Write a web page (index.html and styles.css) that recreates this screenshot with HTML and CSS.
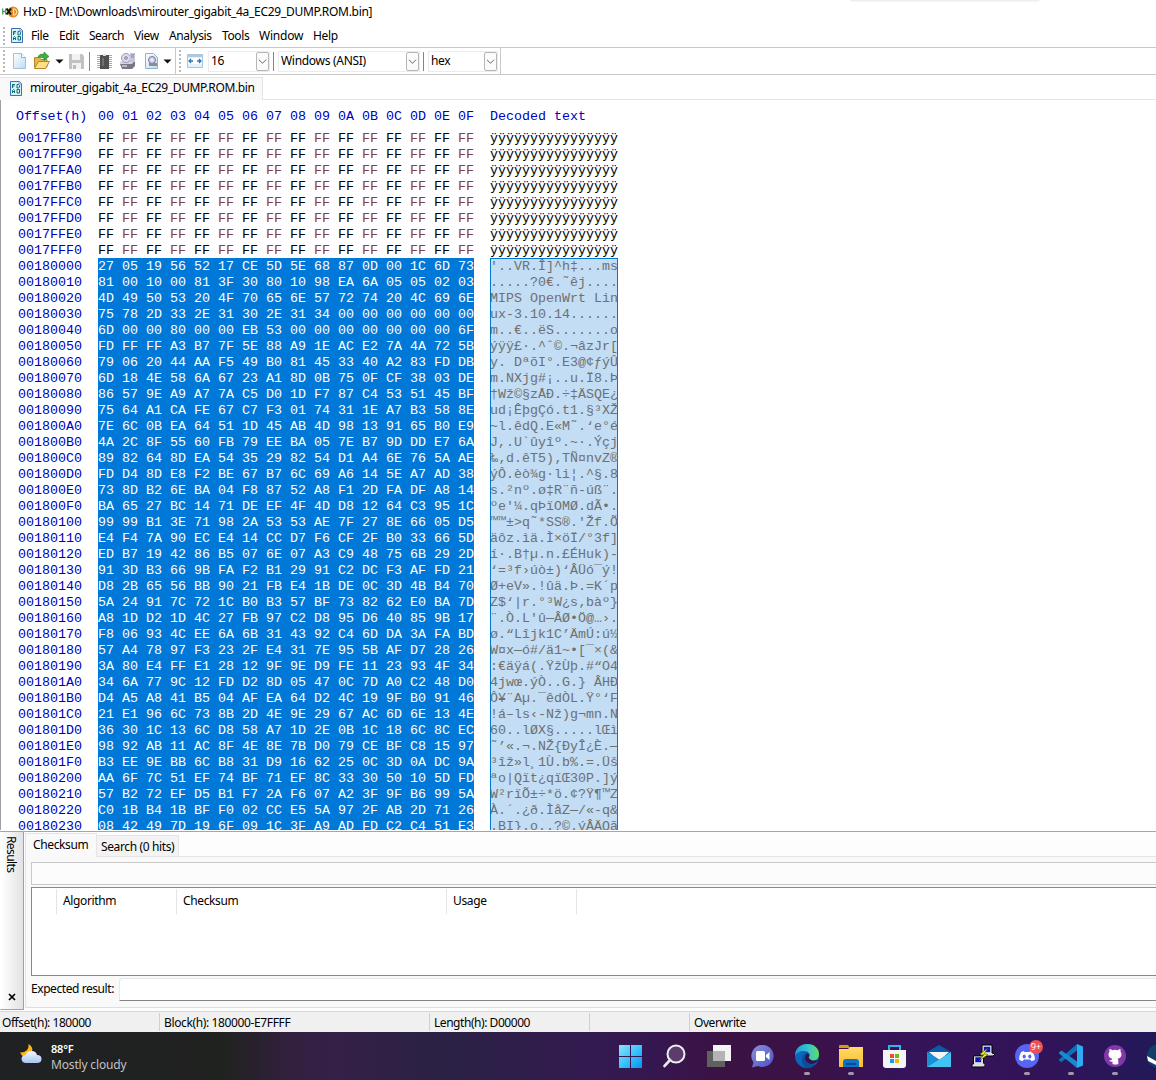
FILE: index.html
```html
<!DOCTYPE html>
<html lang="en">
<head>
<meta charset="utf-8">
<title>HxD</title>
<link rel="stylesheet" href="styles.css">
</head>
<body>
<svg width="0" height="0" class="defs">
  <defs>
    <linearGradient id="page" x1="0" y1="0" x2="1" y2="1"><stop offset="0" stop-color="#fff"/><stop offset="1" stop-color="#bcdcf5"/></linearGradient>
    <linearGradient id="win" x1="0" y1="0" x2="1" y2="1"><stop offset="0" stop-color="#8be4ff"/><stop offset=".5" stop-color="#3cc4fb"/><stop offset="1" stop-color="#0890f5"/></linearGradient>
    <linearGradient id="edge" x1="0" y1="0" x2="1" y2="0"><stop offset="0" stop-color="#1a9be0"/><stop offset=".6" stop-color="#38c8c8"/><stop offset="1" stop-color="#62dc58"/></linearGradient>
    <linearGradient id="folder" x1="0" y1="0" x2="0" y2="1"><stop offset="0" stop-color="#ffdb68"/><stop offset="1" stop-color="#fbbb2c"/></linearGradient>
    <linearGradient id="chat" x1="0" y1="0" x2="1" y2="1"><stop offset="0" stop-color="#8e8fdc"/><stop offset="1" stop-color="#4b52c4"/></linearGradient>
    <linearGradient id="cloud" x1="0" y1="0" x2="0" y2="1"><stop offset="0" stop-color="#f2f7ff"/><stop offset="1" stop-color="#a9c4f0"/></linearGradient>
    <symbol id="hexdoc" viewBox="0 0 12 15">
      <path d="M.5.5h9l2 2v12H.5z" fill="#d8f1f8" stroke="#3a6fb0"/>
      <path d="M9 .5V3h2.500" fill="#fff" stroke="#3a6fb0" stroke-width=".7"/>
      <path d="M2.500 7V3.500H5M2.500 5H4.500M7 3.500v3.500h1.500l1-1v-1.500l-1-1zM2.500 12V9.500l1-1 1 1V12M2.500 10.500h2M7 8.500h2.500V12H7z" fill="none" stroke="#087078"/>
    </symbol>
    <symbol id="chev" viewBox="0 0 12 19"><path d="M2 7.500l4 4 4-4" fill="none" stroke="#555"/></symbol>
  </defs>
</svg>

<div class="window">
  <header class="titlebar">
    <svg class="app-icon" width="17" height="12" viewBox="0 0 17 12">
      <circle cx="11" cy="6" r="5.500" fill="#e58a22"/>
      <path d="M.7 2.500v6M.7 5.500h3M3.700 2.500v6" stroke="#4aa35a" stroke-width="1.300" fill="none"/>
      <path d="M4.500 2.500l4.500 6M9 2.500l-4.500 6" stroke="#111" stroke-width="2"/>
      <path d="M11.500 3v6h1.200q2-1 2-3t-2-3z" fill="none" stroke="#ffe0a8" stroke-width="1.200"/>
    </svg>
    <span class="title">HxD - [M:\Downloads\mirouter_gigabit_4a_EC29_DUMP.ROM.bin]</span>
    <i class="drag-hint"></i>
  </header>

  <nav class="menubar">
    <i class="grip"></i>
    <svg class="menu-icon" width="12" height="15"><use href="#hexdoc"/></svg>
    <span class="m-file">File</span><span class="m-edit">Edit</span><span class="m-search">Search</span><span class="m-view">View</span><span class="m-analysis">Analysis</span><span class="m-tools">Tools</span><span class="m-window">Window</span><span class="m-help">Help</span>
  </nav>

  <div class="toolbar">
    <div class="tools">
      <i class="grip"></i>
      <svg width="168" height="24" viewBox="5 49 168 24">
        <path d="M13.500 53.500h8l4 4v11h-12z" fill="url(#page)" stroke="#a8bfd4"/><path d="M21.500 53.500v4h4" fill="#fff" stroke="#8fb2d0"/>
        <path d="M34.500 67V57.500h5l1.500 2h6V67z" fill="#e8b54a" stroke="#b98524"/><path d="M34.500 68.500l4-7h11l-4 7z" fill="#ffe08a" stroke="#b98524"/>
        <path d="M38 57q1-3.500 6-3v-2l5 4.500-5 4v-2.500q-3-.5-6-1z" fill="#3fae49" stroke="#22802c" stroke-width=".6"/>
        <path d="M55.500 59.500h8l-4 4z" fill="#111"/>
        <path d="M69 54h13l2 2v13H69z" fill="#c2c2c2"/><path d="M72 54h8v6h-8zM72 63h9v6h-9z" fill="#f2f2f2"/><path d="M73 65h3v4h-3z" fill="#bbb"/>
        <path d="M89.500 52v19" stroke="#858585"/>
        <path d="M98.500 55v14M110.500 55v14" stroke="#aaa" stroke-width="3" stroke-dasharray="1 1"/><path d="M100 55h9v14h-9z" fill="#505050"/><path d="M103 54h3v2h-3z" fill="#ddd"/><path d="M102 58h2v8h-2z" fill="#707070"/>
        <path d="M120 64l4-3h11v5l-3 3h-10z" fill="#777785"/><path d="M120 62l4-2h11l-3 4h-12z" fill="#d4d4dc"/><circle cx="126" cy="58" r="4.500" fill="#dcdcf2" stroke="#9898c4"/><circle cx="126" cy="58" r="1.300" fill="#f8f8ff" stroke="#777"/><path d="M130 53h5v9h-5z" fill="#c4c4da"/><path d="M131 55h3M131 57h3" stroke="#8888ac"/><path d="M122 66h5" stroke="#f8f8f8"/>
        <path d="M145.500 53.500h8l4 4v11h-12z" fill="url(#page)" stroke="#92b0cf"/><circle cx="152" cy="60" r="3.500" fill="#d0d0e8" stroke="#77779f"/><path d="M149 63h8v3h-8z" fill="#8c8c98"/><circle cx="152" cy="60" r="1" fill="#fff"/>
        <path d="M163.500 59.500h8l-4 4z" fill="#111"/>
      </svg>
    </div>
    <div class="tools options">
      <i class="grip"></i>
      <svg class="width-icon" width="16" height="14" viewBox="0 0 16 14"><path d="M.5.5h15v13H.5z" fill="#e4f2fc" stroke="#a9c4dc"/><path d="M0 0h16v3H0z" fill="#aec8dd"/><path d="M1 4h14v6H1z" fill="#fff"/><path d="M2 7h4M10 7h4M4 5L2 7l2 2M12 5l2 2-2 2" stroke="#2878bd" fill="none" stroke-width="1.300"/></svg>
      <div class="combo c1"><span>16</span><svg width="13" height="19"><use href="#chev"/></svg></div>
      <i class="sep"></i>
      <div class="combo c2"><span>Windows (ANSI)</span><svg width="13" height="19"><use href="#chev"/></svg></div>
      <i class="sep"></i>
      <div class="combo c3"><span>hex</span><svg width="13" height="19"><use href="#chev"/></svg></div>
    </div>
  </div>

  <div class="doc-tabs">
    <div class="doc-tab"><svg width="12" height="15"><use href="#hexdoc"/></svg><span>mirouter_gigabit_4a_EC29_DUMP.ROM.bin</span></div>
    <div class="doc-fill"></div>
  </div>

  <main class="editor">
    <div class="hex-head"><span class="off">Offset(h)</span><span class="cols">00 01 02 03 04 05 06 07 08 09 0A 0B 0C 0D 0E 0F</span><span>Decoded text</span></div>
    <div class="hex-body" id="hex"></div>
  </main>

  <section class="results">
    <aside class="side"><span class="side-label">Results</span><svg width="8" height="8" viewBox="0 0 8 8"><path d="M1 1l6 6M7 1L1 7" stroke="#000" stroke-width="1.700"/></svg></aside>
    <div class="panel">
      <div class="panel-tabs"><div class="ptab active"><span>Checksum</span></div><div class="ptab"><span>Search (0 hits)</span></div><div class="pfill"></div></div>
      <div class="panel-page">
        <div class="strip"></div>
        <div class="list">
          <div class="cell k0"></div><div class="cell k1"><span>Algorithm</span></div><div class="cell k2"><span>Checksum</span></div><div class="cell k3"><span>Usage</span></div>
        </div>
        <div class="expected"><span>Expected result:</span><div class="field"></div></div>
      </div>
    </div>
  </section>

  <footer class="status">
    <div class="s1"><span>Offset(h): 180000</span></div><div class="s2"><span>Block(h): 180000-E7FFFF</span></div><div class="s3"><span>Length(h): D00000</span></div><div class="s4"></div><div class="s5"><span>Overwrite</span></div>
  </footer>
</div>

<div class="taskbar">
  <div class="weather">
    <svg width="22" height="20" viewBox="0 0 22 20"><path d="M8.500 0q5 3 3.500 7.500T5 13Q2 12.500 0 8.500q4 .5 6.500-2T8.500 0z" fill="#fbb716"/><path d="M6 19q-4 0-4.500-4 0-3.500 4-4Q7 7 11.500 7q4.500 0 5.500 4 4.500 0 4.500 4T17 19z" fill="url(#cloud)"/></svg>
    <div class="w-text"><b>88°F</b><span>Mostly cloudy</span></div>
  </div>
  <div class="apps">
    <div class="app"><svg viewBox="0 0 24 24"><path d="M0 1h11v11H0zM12 1h11v11H12zM0 13h11v11H0zM12 13h11v11H12z" fill="url(#win)"/></svg></div>
    <div class="app"><svg viewBox="0 0 24 24"><circle cx="13" cy="10" r="8.500" fill="#6a4a78" fill-opacity=".75" stroke="#eee" stroke-width="2"/><path d="M7 16l-5.500 6" stroke="#e8e8e8" stroke-width="2.600" stroke-linecap="round"/></svg></div>
    <div class="app"><svg viewBox="0 0 24 24"><path d="M6 1h18v16H6z" fill="#f3f3f3"/><path d="M0 7h18v16H0z" fill="#606060"/><path d="M6 7h12v10H6z" fill="#b4b4b4"/></svg></div>
    <div class="app"><svg viewBox="0 0 24 24"><path d="M12 1a11 11 0 1 1-5 21l-6 1.500 1.500-5A11 11 0 0 1 12 1z" fill="url(#chat)"/><rect x="5" y="7" width="9" height="10" rx="1.500" fill="#fff"/><path d="M15 11l3.500-3v8L15 13z" fill="#fff"/></svg></div>
    <div class="app"><svg viewBox="0 0 24 24"><circle cx="12" cy="12" r="12" fill="#0c65b8"/><path d="M0 12C0 4 6 0 12 0c8 0 12 5 12 10 0 5-4 7-7 7-4 0-5-2-3-4 2-3-1-6-5-6-4 0-8 2-9 5z" fill="url(#edge)"/><path d="M8.500 13c0 6 6 9 12.500 6.500A12 12 0 0 1 13 24C5 22 5 13 11 8.500c3 0 4.500 2 3 4.500-2 3 1 4 3 4 2 0 4-.5 5-1.500-1 3-5 5-8 4.500-4-.5-6-4-5.500-7z" fill="#0a4f9c"/><path d="M13.500 13.500q1.500-3-1-4-3 2-2.500 5.500 1.500 4 6 5 5 0 7-4-7 2-9.500-2.500z" fill="#371046"/></svg><i></i></div>
    <div class="app"><svg viewBox="0 0 24 24"><path d="M0 2q0-1 1-1h8l2 3H0z" fill="#d99a0b"/><path d="M0 5h9l2-2h13v20H0z" fill="url(#folder)"/><path d="M4 23v-5q0-3 3-3h10q3 0 3 3v5z" fill="#0f72c4"/><path d="M7 19h10v2H7z" fill="#064b8d"/></svg><i></i></div>
    <div class="app"><svg viewBox="0 0 24 24"><path d="M6 7V2h11v5" fill="none" stroke="#2fb5ec" stroke-width="2"/><path d="M0 6h23v15q0 3-3 3H3q-3 0-3-3z" fill="#f4f4f4"/><path d="M7 10h4v4H7z" fill="#e8502a"/><path d="M12 10h4v4h-4z" fill="#7bb518"/><path d="M7 15h4v4H7z" fill="#129fe2"/><path d="M12 15h4v4h-4z" fill="#f7b40c"/></svg></div>
    <div class="app"><svg viewBox="0 0 24 24"><path d="M0 8l12-7 12 7v3H0z" fill="#0a5ca8"/><path d="M2 8h20L12 17z" fill="#f4f4f4"/><path d="M0 8l24 15H0z" fill="#1998df"/><path d="M24 8v15H0z" fill="#43c3f2"/><path d="M0 8v15l12-7.500z" fill="#198fd6"/></svg></div>
    <div class="app"><svg viewBox="0 0 24 24"><path d="M11 1h10v8l3 1-2 2H9V10l2-1z" fill="#ddd" stroke="#000"/><path d="M12.500 2.500h7v6h-7z" fill="#0814c0" stroke="#fff" stroke-width=".5"/><path d="M2.500 12h10v7l2 2-2 2H1v-3h1.500z" fill="#ddd" stroke="#000"/><path d="M4 13h6.500v5.500H4z" fill="#0814c0" stroke="#fff" stroke-width=".5"/><path d="M17 4l-8 6 4 .5L8 17l9-6.500-4-.5z" fill="#ff0" stroke="#443b00" stroke-width=".5"/></svg></div>
    <div class="app"><svg viewBox="0 0 24 24"><circle cx="12" cy="12" r="12" fill="#5865f2"/><path d="M8.500 7l1 1h5l1-1 2.500 1.200q2 3.800 2 7.300-2 1.500-3.800 1.500l-1-1.500H8.800l-1 1.500Q6 17 4 15.500q0-3.500 2-7.300z" fill="#fff"/><ellipse cx="9.200" cy="12.500" rx="1.600" ry="1.900" fill="#5865f2"/><ellipse cx="14.800" cy="12.500" rx="1.600" ry="1.900" fill="#5865f2"/></svg><i></i><span class="badge">9+</span></div>
    <div class="app"><svg viewBox="0 0 24 24"><path d="M0 15.500L18 0v6.500L2.500 18 0 16.500z" fill="#0e70b8"/><path d="M0 8.500L2.500 6.500 18 17.500V24L0 9.500z" fill="#168bd2"/><path d="M18 0l6 2.500v19L18 24z" fill="#30aaf0"/></svg><i></i></div>
    <div class="app"><svg viewBox="0 0 24 24"><circle cx="12" cy="12" r="11" fill="#8438a8"/><path d="M9.500 20v-2.500q-2.500.7-3.500-1.500 1.500.5 2.500 0 .3-.8 1-1.200Q5.500 14 5.500 10.500q0-1.800 1-2.800-.3-1.500.2-2.700 1.700.2 2.600 1.200 2.700-.7 5.400 0 .9-1 2.600-1.200.5 1.200.2 2.700 1 1 1 2.800 0 3.500-4 4.300.8.900.8 2.200v3q-3 1-5.800 0z" fill="#fff"/></svg><i></i></div>
    <div class="app last"><svg viewBox="0 0 24 24"><circle cx="12" cy="12" r="12" fill="#123f68"/><path d="M0 12l9 5 5-5v6l-5 3-8-4z" fill="#fff"/></svg></div>
  </div>
</div>
<script src="app.js"></script>
</body>
</html>
```

FILE: styles.css
```css
* { box-sizing: border-box; }
body { margin: 0; width: 1156px; height: 1080px; overflow: hidden; background: #fff; color: #000; font: 12px/16px "Noto Sans", "Open Sans", sans-serif; }
.defs { position: absolute; }
svg { display: block; flex: none; }
span { white-space: pre; }
.window { height: 1032px; display: flex; flex-direction: column; font-size: 12px; letter-spacing: -0.37px; }

.titlebar { height: 24px; display: flex; align-items: center; gap: 4px; padding-left: 2px; padding-bottom: 1px; position: relative; }
.title { letter-spacing: -0.29px; }
.drag-hint { position: absolute; left: 849px; top: -8px; width: 192px; height: 9px; border-radius: 8px; background: #eee; box-shadow: 0 0 2px #ddd; }

.menubar { height: 23px; display: flex; align-items: center; padding-left: 3px; }
.grip { flex: none; width: 2px; height: 18px; background: repeating-linear-gradient(#b9b9b9 0 2px, transparent 2px 4px); }
.menu-icon { margin: 0 8px 0 6px; }
.menubar span { flex: none; }
.m-file { width: 28px; } .m-edit { width: 30px; } .m-search { width: 45px; letter-spacing: -0.5px; } .m-view { width: 35px; }
.m-analysis { width: 53px; } .m-tools { width: 37px; } .m-window { width: 54px; letter-spacing: -0.2px; }

.toolbar { height: 28px; display: flex; border-top: 1px solid #c8c8c8; border-bottom: 1px solid #c8c8c8; }
.tools { display: flex; align-items: center; padding-left: 3px; width: 176px; border-right: 1px solid #c8c8c8; }
.tools > .grip { height: 22px; }
.tools.options { width: 325px; }
.width-icon { margin: 0 5px 0 6px; }
.combo { height: 21px; display: flex; align-items: center; justify-content: space-between; border: 1px solid #ececec; padding-left: 2px; }
.combo svg { border: 1px solid #b5b5b5; border-radius: 2px; background: #fbfbfb; }
.c1 { width: 62px; } .c2 { width: 142px; letter-spacing: -0.3px; } .c3 { width: 70px; }
.sep { width: 1px; height: 19px; background: #858585; margin: 0 4px 0 3px; }

.doc-tabs { height: 25px; display: flex; padding-top: 2px; }
.doc-tab { width: 263px; display: flex; align-items: center; gap: 8px; padding-left: 10px; background: #f9f9f9; border: 1px solid #e5e5e5; border-width: 1px 1px 0 0; padding-bottom: 2px; }
.doc-fill { flex: 1; border-bottom: 1px solid #e5e5e5; }

.editor { height: 730px; overflow: hidden; border-left: 1px solid #a0a0a8; font: 13.333px/18px "Courier New", "Liberation Mono", monospace; letter-spacing: 0; }
.hex-head { height: 30px; padding-top: 8px; display: flex; color: #0000bf; }
.hex-head .off { width: 82px; margin-left: 15px; letter-spacing: -0.1px; }
.hex-head .cols { width: 392px; }
.hex-body { display: grid; grid-template-columns: 80px 376px 144px; padding-left: 17px; }
.rows { display: flex; flex-direction: column; }
.rows span { height: 16px; flex: none; }
.offs { color: #0000bf; }
.hexes b { font-weight: 400; color: #854040; }
.chars { margin-left: 16px; width: 128px; }
.hexes .sel { background: #0078d7; color: #fff; width: 376px; }
.sel-text { display: flex; flex-direction: column; background: #c2ddf4; color: #707070; width: 128px; box-shadow: inset 1px 0 #0078d7, inset -1px 0 #0078d7, inset 0 1px #0078d7; }

.results { height: 180px; margin-top: 1px; display: flex; border-top: 1px solid #a5a5ad; background: #fdfdfd; }
.side { width: 24px; height: 178px; display: flex; flex-direction: column; justify-content: space-between; align-items: center; border: 1px solid #a0a0a0; border-width: 0 1px 1px 0; border-left: 1px solid #fff; background: linear-gradient(90deg, #fff, #e2e2e4); padding: 4px 0 8px; }
.side-label { writing-mode: vertical-rl; margin-right: 3px; letter-spacing: -0.6px; }
.panel { flex: 1; margin-left: 1px; display: flex; flex-direction: column; }
.panel-tabs { height: 25px; display: flex; align-items: flex-end; padding-top: 1px; }
.ptab { width: 82px; height: 22px; border: 1px solid #e5e5e5; border-left: 0; background: #f3f3f3; padding: 3px 0 0 4px; }
.ptab.active { width: 72px; height: 24px; background: #f9f9f9; border: 1px solid #e5e5e5; border-bottom: 0; padding: 3px 0 0 7px; }
.pfill { flex: 1; height: 24px; border-bottom: 1px solid #e5e5e5; }
.panel-page { height: 151px; background: #f9f9f9; border-left: 1px solid #e5e5e5; border-bottom: 1px solid #dedede; padding: 5px 0 0 5px; }
.strip { height: 23px; border: 1px solid #c8c8c8; border-right: 0; background: #fcfcfc; }
.list { height: 89px; margin-top: 2px; border: 1px solid #828790; border-right: 0; background: #fff; display: flex; padding-top: 1px; }
.cell { height: 25px; border-right: 1px solid #e5e5e5; padding: 4px 0 0 6px; }
.k0 { width: 25px; } .k1 { width: 120px; } .k2 { width: 270px; } .k3 { width: 130px; }
.expected { display: flex; margin-top: 2px; align-items: center; }
.expected span { width: 88px; padding-bottom: 1px; letter-spacing: -0.43px; }
.field { flex: 1; height: 23px; background: #fff; border: 1px solid #e8e8e8; border-width: 1px 0 1px 1px; border-bottom-color: #858585; border-radius: 3px 0 0 0; }

.status { height: 21px; background: #f0f0f0; border-top: 1px solid #d7d7d7; display: flex; padding-top: 1px; letter-spacing: -0.45px; }
.status div { height: 18px; border-right: 1px solid #d0d0d0; padding: 2px 0 0 4px; }
.status .s1 { width: 160px; padding-left: 2px; } .s2 { width: 270px; letter-spacing: -0.37px; } .s3 { width: 160px; } .s4 { width: 100px; }
.status .s5 { border: 0; }

.taskbar { height: 48px; display: flex; justify-content: space-between; background: linear-gradient(90deg, #202124 0, #202220 225px, #33203f 290px, #352048 335px, #2a2144 440px, #321c4e 560px, #351750 655px, #3b1244 720px, #3b1246 800px, #36135a 900px, #321358 1040px, #22195a 1156px); }
.weather { display: flex; padding: 12px 0 0 20px; gap: 9px; color: #fff; }
.w-text { display: flex; flex-direction: column; margin-top: -3px; font-size: 12px; }
.w-text b { font-weight: 600; font-size: 11px; letter-spacing: -0.2px; }
.w-text span { color: #c0c0c0; letter-spacing: -0.17px; }
.apps { width: 547px; display: flex; overflow: hidden; }
.app { flex: none; width: 44px; position: relative; display: flex; flex-direction: column; align-items: center; padding-top: 12px; gap: 4px; }
.app svg { width: 24px; height: 24px; }
.app i { width: 6px; height: 3px; border-radius: 2px; background: #a596ae; }
.badge { position: absolute; left: 24px; top: 8px; width: 14px; height: 14px; border-radius: 50%; background: #ee4f55; color: #fff; font-size: 9px; line-height: 13px; text-align: center; }
```

FILE: app.js
```js
const bytes = `
27 05 19 56 52 17 CE 5D 5E 68 87 0D 00 1C 6D 73
81 00 10 00 81 3F 30 80 10 98 EA 6A 05 05 02 03
4D 49 50 53 20 4F 70 65 6E 57 72 74 20 4C 69 6E
75 78 2D 33 2E 31 30 2E 31 34 00 00 00 00 00 00
6D 00 00 80 00 00 EB 53 00 00 00 00 00 00 00 6F
FD FF FF A3 B7 7F 5E 88 A9 1E AC E2 7A 4A 72 5B
79 06 20 44 AA F5 49 B0 81 45 33 40 A2 83 FD DB
6D 18 4E 58 6A 67 23 A1 8D 0B 75 0F CF 38 03 DE
86 57 9E A9 A7 7A C5 D0 1D F7 87 C4 53 51 45 BF
75 64 A1 CA FE 67 C7 F3 01 74 31 1E A7 B3 58 8E
7E 6C 0B EA 64 51 1D 45 AB 4D 98 13 91 65 B0 E9
4A 2C 8F 55 60 FB 79 EE BA 05 7E B7 9D DD E7 6A
89 82 64 8D EA 54 35 29 82 54 D1 A4 6E 76 5A AE
FD D4 8D E8 F2 BE 67 B7 6C 69 A6 14 5E A7 AD 38
73 8D B2 6E BA 04 F8 87 52 A8 F1 2D FA DF A8 14
BA 65 27 BC 14 71 DE EF 4F 4D D8 12 64 C3 95 1C
99 99 B1 3E 71 98 2A 53 53 AE 7F 27 8E 66 05 D5
E4 F4 7A 90 EC E4 14 CC D7 F6 CF 2F B0 33 66 5D
ED B7 19 42 86 B5 07 6E 07 A3 C9 48 75 6B 29 2D
91 3D B3 66 9B FA F2 B1 29 91 C2 DC F3 AF FD 21
D8 2B 65 56 BB 90 21 FB E4 1B DE 0C 3D 4B B4 70
5A 24 91 7C 72 1C B0 B3 57 BF 73 82 62 E0 BA 7D
A8 1D D2 1D 4C 27 FB 97 C2 D8 95 D6 40 85 9B 17
F8 06 93 4C EE 6A 6B 31 43 92 C4 6D DA 3A FA BD
57 A4 78 97 F3 23 2F E4 31 7E 95 5B AF D7 28 26
3A 80 E4 FF E1 28 12 9F 9E D9 FE 11 23 93 4F 34
34 6A 77 9C 12 FD D2 8D 05 47 0C 7D A0 C2 48 D0
D4 A5 A8 41 B5 04 AF EA 64 D2 4C 19 9F B0 91 46
21 E1 96 6C 73 8B 2D 4E 9E 29 67 AC 6D 6E 13 4E
36 30 1C 13 6C D8 58 A7 1D 2E 0B 1C 18 6C 8C EC
98 92 AB 11 AC 8F 4E 8E 7B D0 79 CE BF C8 15 97
B3 EE 9E BB 6C B8 31 D9 16 62 25 0C 3D 0A DC 9A
AA 6F 7C 51 EF 74 BF 71 EF 8C 33 30 50 10 5D FD
57 B2 72 EF D5 B1 F7 2A F6 07 A2 3F 9F B6 99 5A
C0 1B B4 1B BF F0 02 CC E5 5A 97 2F AB 2D 71 26
08 42 49 7D 19 6F 09 1C 3F A9 AD FD C2 C4 51 E3`.trim().split("\n");

const cp1252 = new TextDecoder("windows-1252");
const unprintable = new Set([0x7f, 0x81, 0x8d, 0x8f, 0x90, 0x9d, 0xad]);

function decode(row) {
  return row.split(" ").map(h => {
    const n = parseInt(h, 16);
    return n < 32 || unprintable.has(n) ? "." : cp1252.decode(new Uint8Array([n]));
  }).join("");
}

function column(name) {
  const el = document.createElement("div");
  el.className = "rows " + name;
  document.getElementById("hex").append(el);
  return el;
}

function line(parent, text, cls) {
  const el = document.createElement("span");
  el.textContent = text;
  if (cls) el.className = cls;
  parent.append(el);
  return el;
}

const offs = column("offs"), hexes = column("hexes"), chars = column("chars");
const base = 0x17ff80;
for (let i = 0; i < 8 + bytes.length; i++) {
  line(offs, (base + i * 16).toString(16).toUpperCase().padStart(8, "0"));
}
for (let i = 0; i < 8; i++) {
  line(hexes, "").innerHTML = Array(8).fill("FF <b>FF</b>").join(" ");
  line(chars, "ÿ".repeat(16));
}
const selected = document.createElement("div");
selected.className = "sel-text";
chars.append(selected);
for (const row of bytes) {
  line(hexes, row, "sel");
  line(selected, decode(row));
}
```
